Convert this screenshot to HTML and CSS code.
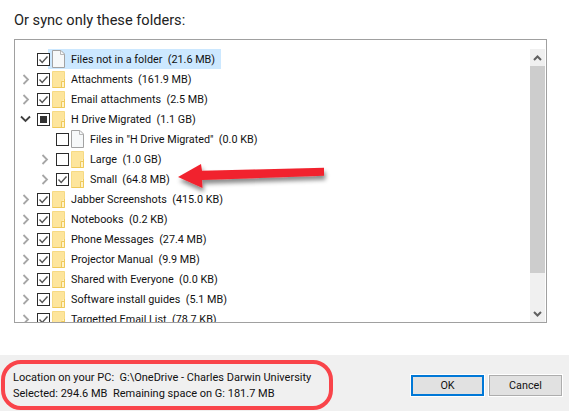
FILE: index.html
```html
<!DOCTYPE html>
<html lang="en">
<head>
<meta charset="utf-8">
<title>Sync folders</title>
<link rel="stylesheet" href="styles.css">
</head>
<body>
<svg class="defs" width="0" height="0" aria-hidden="true">
  <symbol id="folder" viewBox="0 0 13 17">
    <path d="M.5.5H12.5V16.5H.5Z" fill="#fde59c" stroke="#f6da84"/>
    <path d="M9 16V11L12 8V16Z" fill="#fff2c6"/>
    <path d="M9.500 16V10.500H12.500M.5 16.500H12.500V8" fill="none" stroke="#efc95a"/>
  </symbol>
  <symbol id="file" viewBox="0 0 13 18">
    <path d="M.5.5H9L12.500 4V17.500H.5Z" fill="#f6f8f9" stroke="#a2a2a2"/>
    <path d="M8.500 .5V4.500H12.500" fill="none" stroke="#b8b8b8"/>
  </symbol>
  <symbol id="chev-r" viewBox="0 0 8 11"><path d="M1.500 1L6 5.500 1.500 10" fill="none" stroke="#a6a6a6" stroke-width="1.800"/></symbol>
  <symbol id="chev-d" viewBox="0 0 11 8"><path d="M1 1.500L5.500 6 10 1.500" fill="none" stroke="#404040" stroke-width="1.800"/></symbol>
  <symbol id="tick" viewBox="0 0 11 11"><path d="M1.500 5.500L4.200 8.500 9.500 2.500" fill="none" stroke="#555" stroke-width="1.400"/></symbol>
</svg>

<main class="main">
  <h1 class="heading">Or sync only these folders:</h1>
  <div class="box">
    <ul class="tree">
      <li class="row"><span class="twist"></span><span class="check"><svg><use href="#tick"/></svg></span><span class="sel"><svg class="ico file"><use href="#file"/></svg><span class="label">Files not in a folder  (21.6 MB)</span></span></li>
      <li class="row"><span class="twist"><svg class="cr"><use href="#chev-r"/></svg></span><span class="check"><svg><use href="#tick"/></svg></span><svg class="ico"><use href="#folder"/></svg><span class="label">Attachments  (161.9 MB)</span></li>
      <li class="row"><span class="twist"><svg class="cr"><use href="#chev-r"/></svg></span><span class="check"><svg><use href="#tick"/></svg></span><svg class="ico"><use href="#folder"/></svg><span class="label">Email attachments  (2.5 MB)</span></li>
      <li class="row"><span class="twist"><svg class="cd"><use href="#chev-d"/></svg></span><span class="check"><span class="partial"></span></span><svg class="ico"><use href="#folder"/></svg><span class="label">H Drive Migrated  (1.1 GB)</span></li>
      <li class="row sub"><span class="twist"></span><span class="check"></span><svg class="ico file"><use href="#file"/></svg><span class="label">Files in "H Drive Migrated"  (0.0 KB)</span></li>
      <li class="row sub"><span class="twist"><svg class="cr"><use href="#chev-r"/></svg></span><span class="check"></span><svg class="ico"><use href="#folder"/></svg><span class="label">Large  (1.0 GB)</span></li>
      <li class="row sub"><span class="twist"><svg class="cr"><use href="#chev-r"/></svg></span><span class="check"><svg><use href="#tick"/></svg></span><svg class="ico"><use href="#folder"/></svg><span class="label">Small  (64.8 MB)</span></li>
      <li class="row"><span class="twist"><svg class="cr"><use href="#chev-r"/></svg></span><span class="check"><svg><use href="#tick"/></svg></span><svg class="ico"><use href="#folder"/></svg><span class="label">Jabber Screenshots  (415.0 KB)</span></li>
      <li class="row"><span class="twist"><svg class="cr"><use href="#chev-r"/></svg></span><span class="check"><svg><use href="#tick"/></svg></span><svg class="ico"><use href="#folder"/></svg><span class="label">Notebooks  (0.2 KB)</span></li>
      <li class="row"><span class="twist"><svg class="cr"><use href="#chev-r"/></svg></span><span class="check"><svg><use href="#tick"/></svg></span><svg class="ico"><use href="#folder"/></svg><span class="label">Phone Messages  (27.4 MB)</span></li>
      <li class="row"><span class="twist"><svg class="cr"><use href="#chev-r"/></svg></span><span class="check"><svg><use href="#tick"/></svg></span><svg class="ico"><use href="#folder"/></svg><span class="label">Projector Manual  (9.9 MB)</span></li>
      <li class="row"><span class="twist"><svg class="cr"><use href="#chev-r"/></svg></span><span class="check"><svg><use href="#tick"/></svg></span><svg class="ico"><use href="#folder"/></svg><span class="label">Shared with Everyone  (0.0 KB)</span></li>
      <li class="row"><span class="twist"><svg class="cr"><use href="#chev-r"/></svg></span><span class="check"><svg><use href="#tick"/></svg></span><svg class="ico"><use href="#folder"/></svg><span class="label">Software install guides  (5.1 MB)</span></li>
      <li class="row"><span class="twist"><svg class="cr"><use href="#chev-r"/></svg></span><span class="check"><svg><use href="#tick"/></svg></span><svg class="ico"><use href="#folder"/></svg><span class="label">Targetted Email List  (78.7 KB)</span></li>
    </ul>
    <div class="scrollbar">
      <div class="sb-btn"><svg width="9" height="6" viewBox="0 0 9 6"><path d="M1 5L4.500 1.500 8 5" fill="none" stroke="#606060" stroke-width="2"/></svg></div>
      <div class="sb-thumb"></div>
      <div class="sb-track"></div>
      <div class="sb-btn"><svg width="9" height="6" viewBox="0 0 9 6"><path d="M1 1L4.500 4.500 8 1" fill="none" stroke="#606060" stroke-width="2"/></svg></div>
    </div>
  </div>
</main>

<footer class="footer">
  <div class="info">
    <div class="info-line">Location on your PC:  G:\OneDrive - Charles Darwin University</div>
    <div class="info-line">Selected: 294.6 MB  Remaining space on G: 181.7 MB</div>
  </div>
  <div class="actions">
    <button class="btn btn-default" type="button">OK</button>
    <button class="btn" type="button">Cancel</button>
  </div>
</footer>

<svg class="arrow" width="150" height="32" viewBox="0 0 150 32" aria-hidden="true">
  <defs><filter id="sh" x="-5%" y="-30%" width="110%" height="180%"><feDropShadow dx="1.500" dy="4" stdDeviation="2" flood-color="#000" flood-opacity=".45"/></filter></defs>
  <path d="M1 15L24 2 25 8.700 147 5.700 147 13.700 25 18 25.500 26Z" fill="#f1232d" filter="url(#sh)"/>
</svg>
<div class="ring"></div>
</body>
</html>
```
FILE: styles.css
```css
* { box-sizing: border-box; }
html, body { margin: 0; padding: 0; }
body {
  width: 569px;
  height: 411px;
  overflow: hidden;
  position: relative;
  background: #fff;
  color: #111;
  font-family: Roboto, "Noto Sans", sans-serif;
  font-size: 10.8px;
  display: flex;
  flex-direction: column;
}
.defs { position: absolute; }
.main { height: 355px; padding: 10px 22px 0 14px; }
.heading {
  margin: 0 0 8px;
  height: 21px;
  line-height: 21px;
  font-size: 14.6px;
  font-weight: 400;
  color: #222;
}
.box {
  display: flex;
  height: 284px;
  border: 1px solid #a0a0a0;
  overflow: hidden;
}
.tree {
  flex: 1;
  list-style: none;
  margin: 0;
  padding: 9px 0 0;
  overflow: hidden;
}
.row {
  display: flex;
  align-items: center;
  height: 20px;
  padding-left: 22px;
}
.row.sub { padding-left: 41px; }
.twist { width: 0; position: relative; height: 20px; display: block; }
.twist svg { position: absolute; }
.cr { width: 8px; height: 11px; left: -15px; top: 5px; }
.cd { width: 11px; height: 8px; left: -17px; top: 6px; }
.check {
  position: relative;
  z-index: 1;
  width: 13px;
  height: 13px;
  border: 1px solid #2b2b2b;
  background: #fff;
  flex: none;
  display: flex;
  align-items: center;
  justify-content: center;
}
.check svg { width: 11px; height: 11px; }
.partial { width: 7px; height: 7px; background: #333; }
.ico { width: 13px; height: 17px; margin-left: 2px; flex: none; }
.ico.file { height: 18px; }
.label { margin-left: 6px; white-space: pre; }
.sel {
  display: flex;
  align-items: center;
  height: 20px;
  width: 173px;
  margin-left: -2px;
  padding-left: 2px;
  background: #cce8ff;
}
.scrollbar {
  width: 15px;
  margin: 9px 1px 0 0;
  flex: none;
  display: flex;
  flex-direction: column;
  background: #f0f0f0;
}
.sb-btn {
  height: 17px;
  flex: none;
  display: flex;
  align-items: center;
  justify-content: center;
}
.sb-thumb { height: 207px; background: #cdcdcd; flex: none; }
.sb-track { flex: 1; }
.footer {
  height: 56px;
  background: #f0f0f0;
  display: flex;
  justify-content: space-between;
  padding: 15px 7px 0 13px;
}
.info { line-height: 16px; font-size: 11px; color: #111; }
.info-line { white-space: pre; }
.actions { display: flex; gap: 5px; margin-top: 5px; }
.btn {
  width: 73px;
  height: 21px;
  font: inherit;
  font-size: 10.8px;
  color: #111;
  background: #e1e1e1;
  border: 1px solid #adadad;
  outline: 1px solid #fff;
  padding: 0;
}
.btn-default { border: 2px solid #0078d7; }
.arrow { position: absolute; left: 177px; top: 162px; overflow: visible; }
.ring {
  position: absolute;
  left: 1px;
  top: 360px;
  width: 332px;
  height: 50px;
  border: 4px solid #f9444a;
  border-radius: 20px;
}
```
